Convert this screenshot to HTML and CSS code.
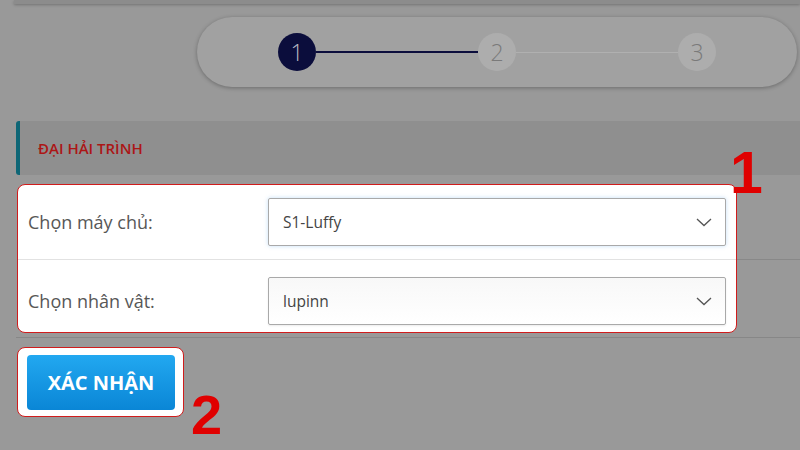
FILE: index.html
```html
<!DOCTYPE html>
<html lang="vi">
<head>
<meta charset="utf-8">
<title>Đại Hải Trình</title>
<link rel="stylesheet" href="styles.css">
</head>
<body>
<div class="page">
  <div class="topbar"></div>
  <div class="stepper-wrap">
    <div class="stepper">
      <div class="step active">1</div>
      <div class="line done"></div>
      <div class="step">2</div>
      <div class="line"></div>
      <div class="step">3</div>
    </div>
  </div>
  <div class="section-head">ĐẠI HẢI TRÌNH</div>
  <div class="form">
    <div class="panel">
      <div class="row">
        <div class="label">Chọn máy chủ:</div>
        <div class="select focus">
          <span>S1-Luffy</span>
          <svg class="chev" width="16" height="9" viewBox="0 0 16 9"><path d="M1 1 L8 7.5 L15 1" fill="none" stroke="#555" stroke-width="1.3"/></svg>
        </div>
      </div>
      <div class="row second">
        <div class="label">Chọn nhân vật:</div>
        <div class="select">
          <span>lupinn</span>
          <svg class="chev" width="16" height="9" viewBox="0 0 16 9"><path d="M1 1 L8 7.5 L15 1" fill="none" stroke="#555" stroke-width="1.3"/></svg>
        </div>
      </div>
    </div>
    <div class="mark mark-1">1</div>
  </div>
  <div class="actions">
    <div class="btn-panel">
      <button class="btn">XÁC NHẬN</button>
    </div>
    <div class="mark mark-2">2</div>
  </div>
</div>
</body>
</html>
```
FILE: styles.css
```css
html, body {
  margin: 0;
  padding: 0;
}
body {
  background: #999999;
  font-family: "Open Sans", "Noto Sans", sans-serif;
  width: 800px;
  height: 450px;
  overflow: hidden;
}
.page {
  position: relative;
  height: 450px;
}
.topbar {
  margin-left: 14px;
  height: 4px;
  background: #8c8c8c;
  box-shadow: 0 1px 3px rgba(0,0,0,0.25);
}
.stepper-wrap {
  padding-left: 197px;
  padding-top: 13px;
}
.stepper {
  width: 600px;
  height: 70px;
  box-sizing: border-box;
  border-radius: 35px;
  background: #a1a1a1;
  box-shadow: 0 1px 4px rgba(0,0,0,0.3);
  display: flex;
  align-items: center;
  padding: 0 81px;
}
.step {
  width: 38px;
  height: 38px;
  border-radius: 50%;
  background: #adadad;
  color: #7a7a7a;
  font-family: "Open Sans", sans-serif;
  font-weight: 300;
  font-size: 23px;
  display: flex;
  align-items: center;
  justify-content: center;
  flex: none;
}
.step.active {
  background: #0b0d3c;
  color: #b8b8c4;
}
.line {
  flex: 1;
  height: 1px;
  background: #b0b0b0;
}
.line.done {
  height: 2px;
  background: #0b0d3c;
}
.section-head {
  margin: 34px 0 0 16px;
  height: 54px;
  box-sizing: border-box;
  background: #8f8f8f;
  border-left: 4px solid #0e6676;
  border-radius: 3px 0 0 3px;
  padding-left: 18px;
  display: flex;
  align-items: center;
  color: #ac1616;
  font-size: 15px;
  font-weight: 600;
}
.form {
  position: relative;
  margin: 9px 0 0 16px;
  padding-bottom: 4px;
  border-bottom: 1px solid #878787;
}
.form::after {
  content: "";
  position: absolute;
  left: 721px;
  right: 0;
  top: 75px;
  height: 1px;
  background: #888;
}
.panel {
  margin-left: 1px;
  width: 720px;
  box-sizing: border-box;
  background: #fff;
  border: 1px solid #d01c1c;
  border-radius: 8px;
  overflow: hidden;
}
.row {
  display: flex;
  align-items: center;
  padding: 13px 10px 13px 10px;
  border-bottom: 1px solid #e2e2e2;
}
.row.second {
  border-bottom: none;
  padding: 17px 10px 7px 10px;
}
.label {
  width: 240px;
  flex: none;
  font-size: 18px;
  color: #575757;
}
.select {
  width: 458px;
  height: 48px;
  box-sizing: border-box;
  border: 1px solid #a9a9a9;
  border-radius: 2px;
  display: flex;
  align-items: center;
  justify-content: space-between;
  padding: 0 13px 0 14px;
  font-size: 15.5px;
  color: #444;
  background: linear-gradient(#f8f8f8, #fff);
  box-shadow: 0 1px 2px rgba(0,0,0,0.08);
}
.select.focus {
  background: #fff;
  box-shadow: 0 0 4px rgba(90,160,230,0.35);
}
.chev {
  display: block;
}
.mark {
  position: absolute;
  font-family: "Liberation Sans", Arial, sans-serif;
  font-weight: 700;
  color: #e00000;
  line-height: 1;
}
.mark-1 {
  font-size: 59px;
  left: 714px;
  top: -40px;
}
.actions {
  position: relative;
  padding: 9px 0 0 17px;
}
.btn-panel {
  width: 167px;
  height: 70px;
  box-sizing: border-box;
  background: #fff;
  border: 1px solid #d01c1c;
  border-radius: 8px;
  padding: 7px 0 0 9px;
}
.btn {
  width: 148px;
  height: 55px;
  border: none;
  border-radius: 4px;
  background: linear-gradient(#22a8f0, #0a86d6);
  color: #fff;
  font-family: "Open Sans", sans-serif;
  font-weight: 700;
  font-size: 20px;
  padding: 0;
  cursor: pointer;
}
.mark-2 {
  font-size: 56px;
  left: 191px;
  top: 49px;
}
```
